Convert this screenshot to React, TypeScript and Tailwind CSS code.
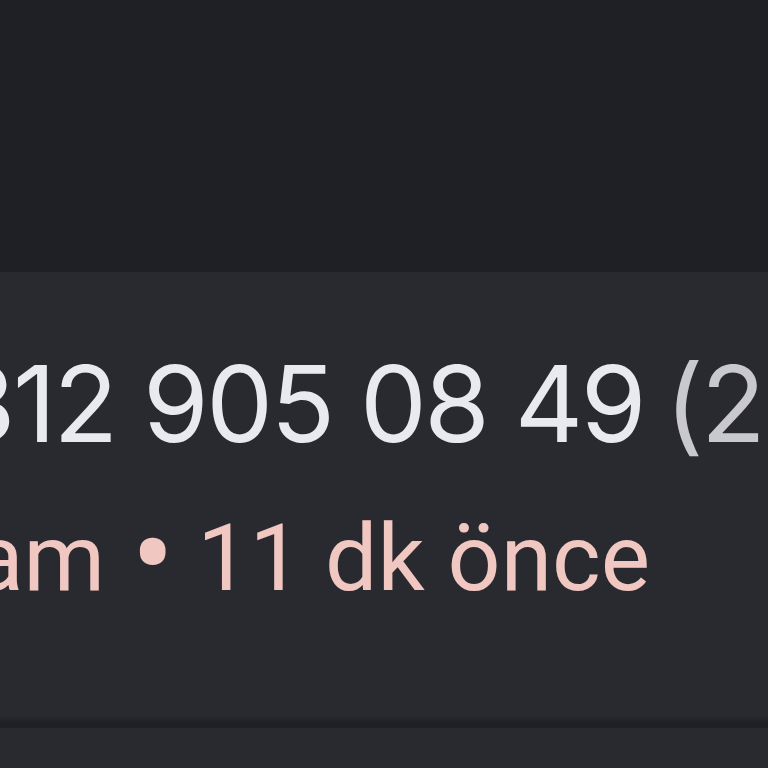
export default function App() {
  return (
    <div className="w-[768px] h-[768px] overflow-hidden bg-[#1f2025] flex flex-col">
      <div className="h-[272px] shrink-0" />
      {/* call log entry */}
      <div className="h-[445px] shrink-0 bg-[#292a30] overflow-hidden flex flex-col whitespace-nowrap">
        <div className="mt-[72px] -ml-[50px] flex items-baseline text-[106px] leading-[120px] font-['Inter',sans-serif] tracking-[-2.5px]">
          <span className="text-[#e9eaef]">312 905 08 49</span>
          <span className="text-[#c9c9cd] ml-[21px]">(2)</span>
        </div>
        <div className="mt-[40px] -ml-[27px] flex items-baseline text-[93px] leading-[110px] font-['Roboto',sans-serif] text-[#f1c7c2]">
          <span>am</span>
          <span className="ml-[26px] mr-[23px] text-[128px] leading-[0] translate-y-[9px]">•</span>
          <span>11 dk önce</span>
        </div>
      </div>
      <div className="h-[11px] shrink-0 bg-gradient-to-b from-[#26272c] via-[#1f2025] to-[#1f2025]" />
      <div className="flex-1 bg-[#292a30]" />
    </div>
  )
}
